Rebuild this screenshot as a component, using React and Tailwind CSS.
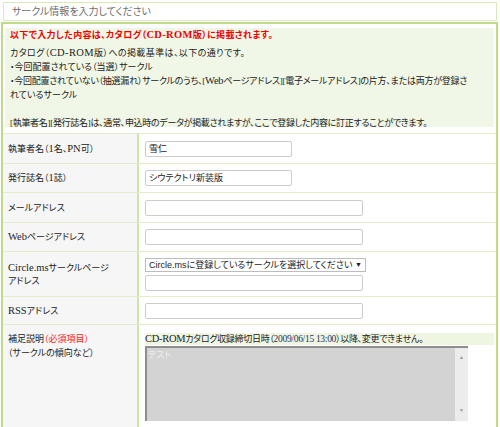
function L({ children }) {
  return <span className="text-[10.5px]">{children}</span>;
}

export default function App() {
  const rowCls = "flex border-t border-[#e1edcc]";
  const lab = "w-[136px] shrink-0 bg-[#f6f6f6] pl-[5px] border-r-2 border-[#cfe5a6] flex whitespace-nowrap";
  const val = "flex-1 pl-[6px] flex";
  const inp = "h-[16px] border border-[#cccccc] rounded-[2px] bg-white flex items-center pl-[3px] font-['Liberation_Sans','Noto_Sans_CJK_JP',sans-serif] text-[9px] text-[#222]";
  return (
    <div className="w-[500px] h-[427px] overflow-hidden bg-white text-[9px] leading-[14px] text-[#222] font-['Liberation_Serif','Noto_Sans_CJK_JP',serif] [font-feature-settings:'palt']">
      <div className="mx-[3px] mt-[2px] h-[19px] border border-[#d9eabb] flex items-center pl-[8px] text-[10px] text-[#6e6e6e]">
        サークル情報を入力してください
      </div>
      <div className="ml-[1px] mt-[1px] w-[497px] h-[405px] border-x-2 border-t-2 border-[#bfdb8a]">
        <div className="mx-[2px] mt-[4px] h-[99px] bg-[#f0f7e6] pl-[5px] whitespace-nowrap">
          <p className="text-[#f00000] font-bold tracking-[0.35px] leading-[12px] pt-[1px]">以下で入力した内容は、カタログ（<L>CD-ROM</L>版）に掲載されます。</p>
          <p className="mt-[5px] tracking-[0.4px]">カタログ（<L>CD-ROM</L>版）への掲載基準は、以下の通りです。</p>
          <p>・今回配置されている（当選）サークル</p>
          <p className="tracking-[-0.25px]">・今回配置されていない（抽選漏れ）サークルのうち、[<L>Web</L>ページアドレス][電子メールアドレス]の片方、または両方が登録さ</p>
          <p>れているサークル</p>
          <p>&nbsp;</p>
          <p className="tracking-[-0.3px]">[執筆者名][発行誌名]は、通常、申込時のデータが掲載されますが、ここで登録した内容に訂正することができます。</p>
        </div>
        <div className="mt-[6px]">
          <div className={rowCls + " h-[30px]"}>
            <div className={lab + " items-center"}><span>執筆者名（<L>1</L>名、<L>PN</L>可）</span></div>
            <div className={val + " items-center"}>
              <div className={inp + " w-[147px]"}>雪仁</div>
            </div>
          </div>
          <div className={rowCls + " h-[29px]"}>
            <div className={lab + " items-center"}><span>発行誌名（<L>1</L>誌）</span></div>
            <div className={val + " items-center"}>
              <div className={inp + " w-[147px]"}>シウテクトリ新装版</div>
            </div>
          </div>
          <div className={rowCls + " h-[30px]"}>
            <div className={lab + " items-center"}>メールアドレス</div>
            <div className={val + " items-center"}>
              <div className={inp + " w-[218px]"}></div>
            </div>
          </div>
          <div className={rowCls + " h-[29px]"}>
            <div className={lab + " items-center"}><span><L>Web</L>ページアドレス</span></div>
            <div className={val + " items-center"}>
              <div className={inp + " w-[218px]"}></div>
            </div>
          </div>
          <div className={rowCls + " h-[45px]"}>
            <div className={lab + " items-center leading-[13px]"}>
              <div><L>Circle.ms</L>サークルページ<br />アドレス</div>
            </div>
            <div className={val + " flex-col justify-center gap-[3px]"}>
              <div className="w-[221px] h-[14px] border border-[#bdbdbd] bg-white flex items-center justify-between pl-[3px] pr-[3px] font-['Liberation_Sans','Noto_Sans_CJK_JP',sans-serif] text-[9px] whitespace-nowrap text-[#222]">
                <span>Circle.msに登録しているサークルを選択してください</span>
                <span className="text-[7px] leading-none">▼</span>
              </div>
              <div className={inp + " w-[218px]"}></div>
            </div>
          </div>
          <div className={rowCls + " h-[28px]"}>
            <div className={lab + " items-center"}><span><L>RSS</L>アドレス</span></div>
            <div className={val + " items-center"}>
              <div className={inp + " w-[218px]"}></div>
            </div>
          </div>
          <div className={rowCls + " h-[110px]"}>
            <div className={lab + " flex-col pt-[7px]"}>
              <div>補足説明<span className="text-[#ff2020]">（必須項目）</span></div>
              <div>（サークルの傾向など）</div>
            </div>
            <div className="flex-1 pl-[6px] pt-[8px] pr-[2px]">
              <div className="h-[12px] bg-[#eef6e2] flex items-center leading-[12px] whitespace-nowrap tracking-[-0.3px]">
                <span><L>CD-ROM</L>カタログ収録締切日時（<span className="text-[#1f2f6a] text-[9.5px]">2009/06/15 13:00</span>）以降、変更できません。</span>
              </div>
              <div className="mt-[1px] w-[323px] h-[75px] flex border-t-2 border-l-2 border-[#8e8e8e] bg-[#d3d3d3]">
                <div className="flex-1 pl-[1px] text-[#efefef] font-['Liberation_Sans','Noto_Sans_CJK_JP',sans-serif]">テスト</div>
                <div className="w-[13px] bg-[#ececec] flex flex-col justify-between items-center text-[5px] text-[#9a9a9a] py-[3px]">
                  <span>▲</span>
                  <span>▼</span>
                </div>
              </div>
            </div>
          </div>
        </div>
      </div>
    </div>
  );
}
